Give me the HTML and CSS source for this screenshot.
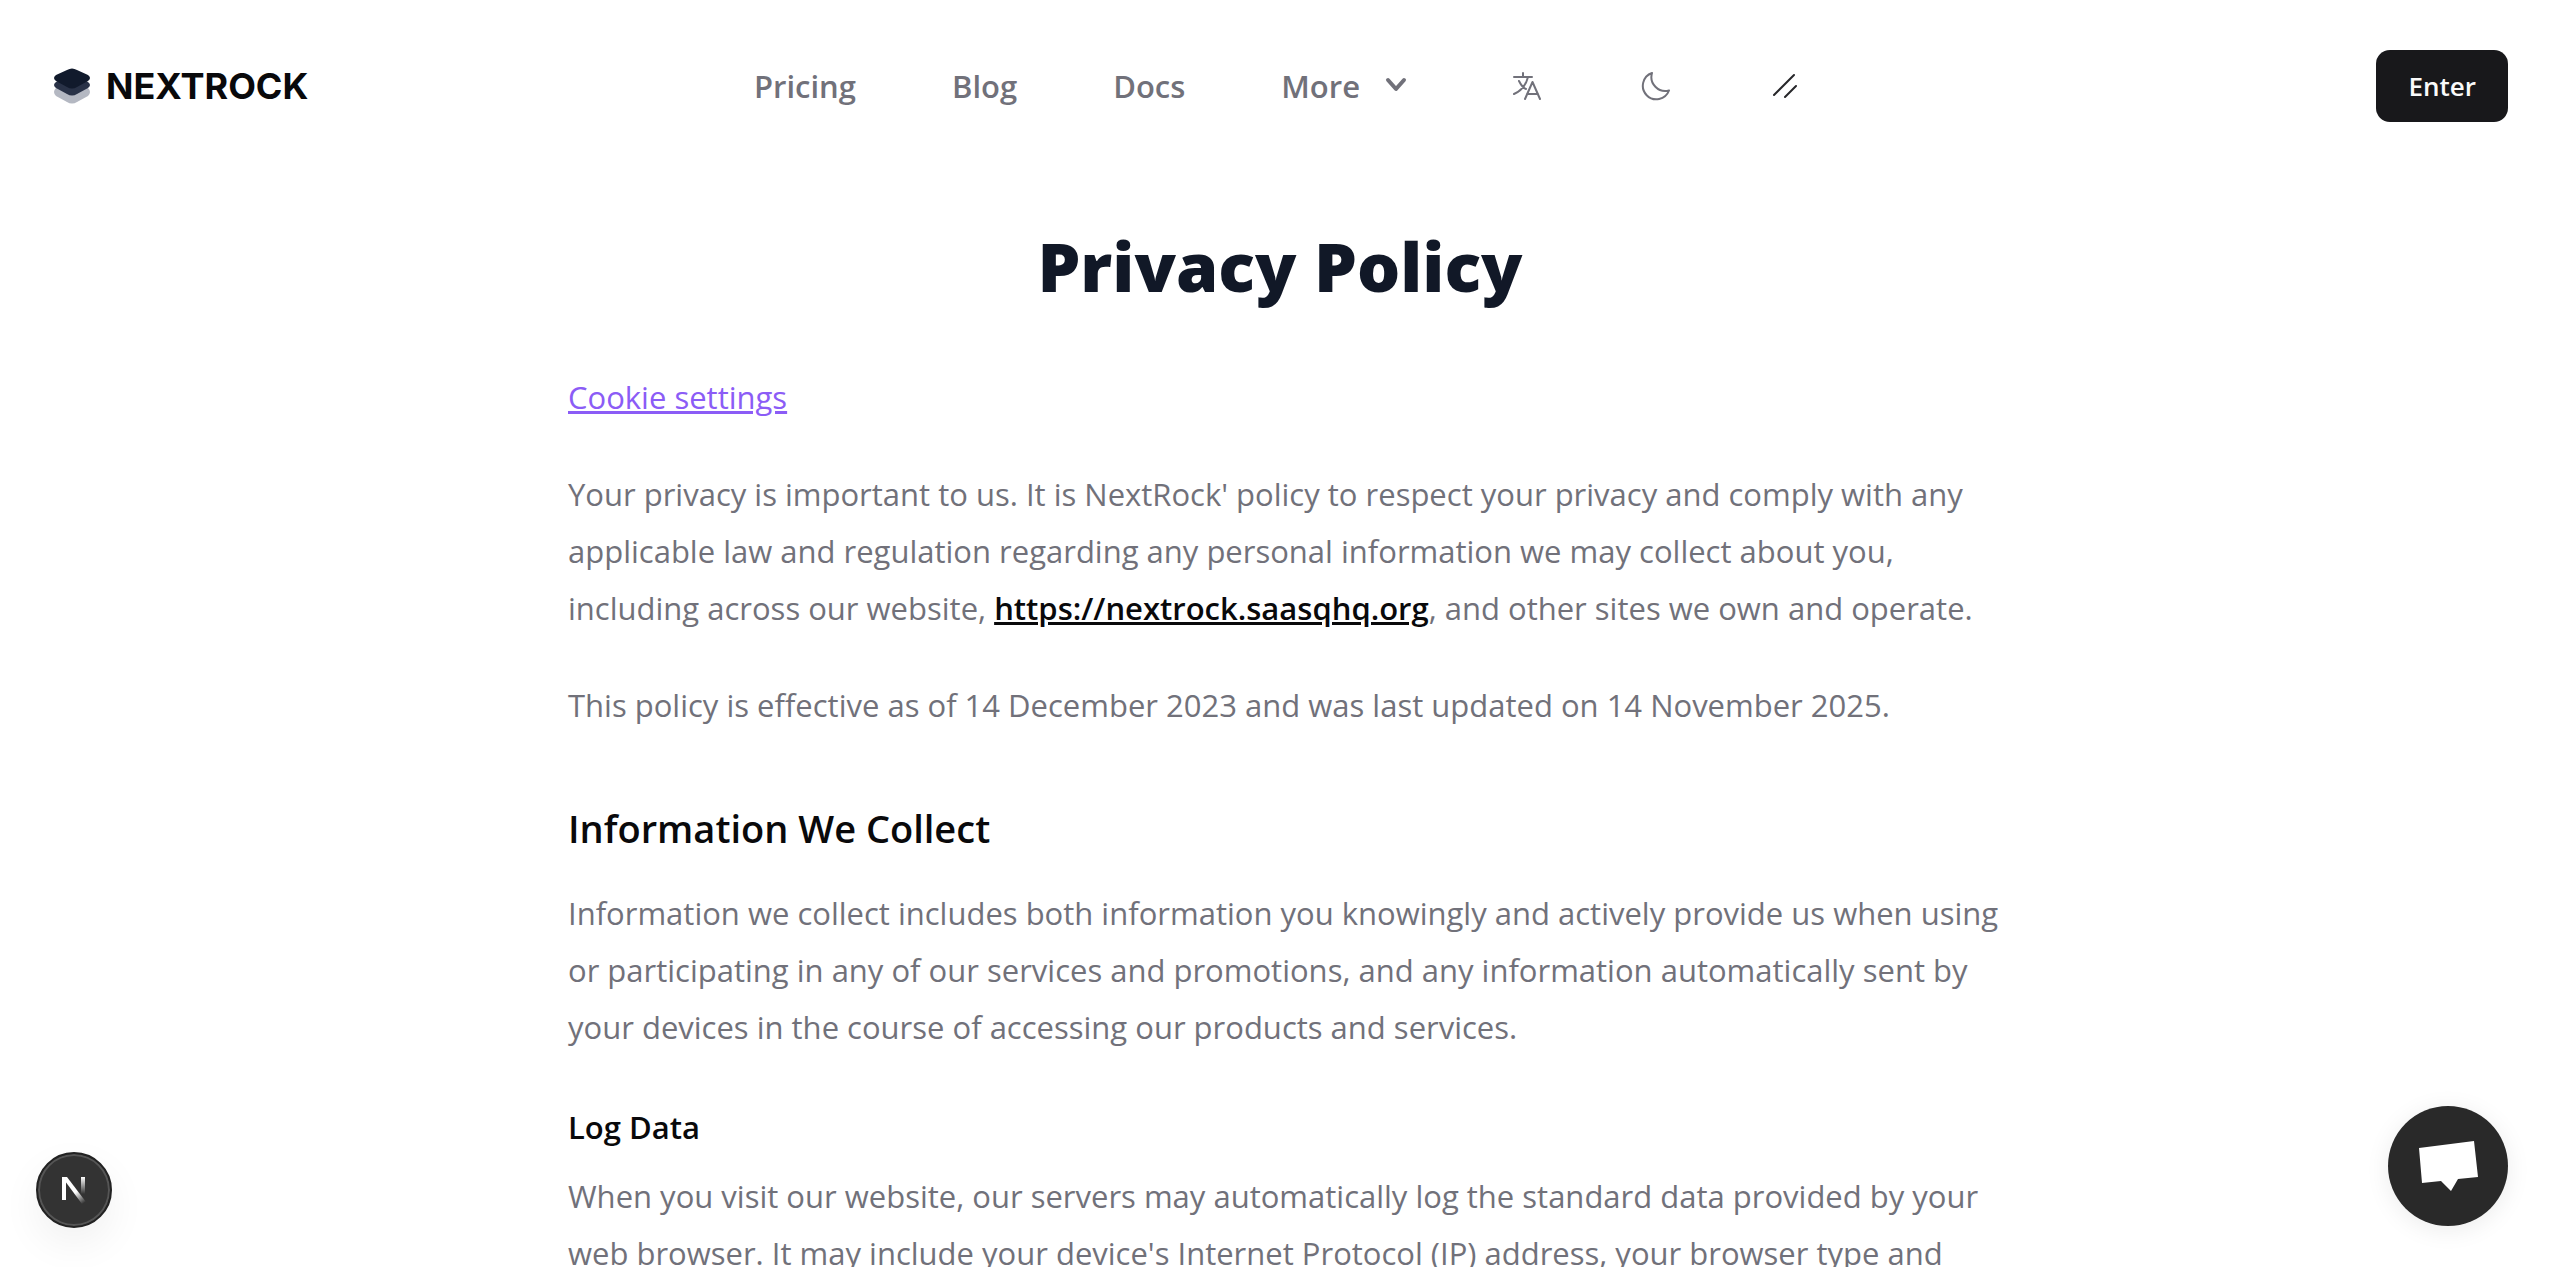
FILE: index.html
```
<!DOCTYPE html>
<html lang="en">

<head>
    <meta charset="UTF-8">
    <meta name="viewport" content="width=device-width, initial-scale=1.0">
    <title>Privacy Policy - NextRock</title>
    <link rel="stylesheet" href="styles.css">
</head>

<body>

    <header class="header">
        <a class="logo" href="#">
            <svg class="logo-icon" viewBox="0 0 36 36" aria-hidden="true">
                <path d="M2 20 L12 15 Q18 12 24 15 L34 20 Q38 24 34 28 L23 34 Q18 37 13 34 L2 28 Q-2 24 2 20Z" fill="#b4b8c2" />
                <path d="M2 14 L12 9 Q18 6 24 9 L34 14 Q38 17 34 20 L23 26 Q18 29 13 26 L2 20 Q-2 17 2 14Z" fill="#293247" />
                <path d="M2 7 L13 2 Q18 -1 23 2 L34 7 Q38 10 34 13 L23 19 Q18 22 13 19 L2 13 Q-2 10 2 7Z" fill="#111a2c" />
            </svg>
            <span>NEXTROCK</span>
        </a>

        <nav class="nav">
            <a href="#">Pricing</a>
            <a href="#">Blog</a>
            <a href="#">Docs</a>
            <button class="more" type="button">
                More
                <svg class="chevron" viewBox="0 0 24 24" aria-hidden="true">
                    <path d="M4 6 L12 15 L20 6" />
                </svg>
            </button>
            <div class="nav-icons">
                <button class="icon-button" type="button" aria-label="Language">
                    <svg viewBox="0 0 30 30" aria-hidden="true">
                        <path d="M2 6 H20 M11 2 V6 M16 6 C14 14 9 20 2 23 M7 10 C9 14 11 17 14 18 M13 28 L20.500 11 L28 28 M15 23 H26" />
                    </svg>
                </button>
                <button class="icon-button" type="button" aria-label="Dark mode">
                    <svg viewBox="0 0 30 30" aria-hidden="true">
                        <path d="M11 2 A13.500 13.500 0 1 0 28 19.500 A14 14 0 0 1 11 2Z" />
                    </svg>
                </button>
                <button class="icon-button dark" type="button" aria-label="Theme lines">
                    <svg viewBox="0 0 30 30" aria-hidden="true">
                        <path d="M4 24 L24 4 M15 26 L26 15" />
                    </svg>
                </button>
            </div>
        </nav>

        <a class="enter" href="#">Enter</a>
    </header>

    <main class="content">
        <h1>Privacy Policy</h1>

        <div class="prose">
            <p><a class="cookie" href="#">Cookie settings</a></p>

            <p>Your privacy is important to us. It is NextRock' policy to respect your privacy and comply with any applicable law and regulation regarding any personal information we may collect about you, including across our website, <a class="site" href="#">https://nextrock.saasqhq.org</a>, and other sites we own and operate.</p>

            <p>This policy is effective as of 14 December 2023 and was last updated on 14 November 2025.</p>

            <h2>Information We Collect</h2>

            <p>Information we collect includes both information you knowingly and actively provide us when using or participating in any of our services and promotions, and any information automatically sent by your devices in the course of accessing our products and services.</p>

            <h3>Log Data</h3>

            <p>When you visit our website, our servers may automatically log the standard data provided by your web browser. It may include your device's Internet Protocol (IP) address, your browser type and</p>
        </div>
    </main>

    <button class="dev-badge" type="button" aria-label="Developer tools">
        <svg viewBox="0 0 28 30" aria-hidden="true">
            <defs>
                <linearGradient id="diagonal" gradientUnits="userSpaceOnUse" x1="16" y1="17" x2="24" y2="28">
                    <stop offset="0" stop-color="#fff" />
                    <stop offset="1" stop-color="#fff" stop-opacity="0" />
                </linearGradient>
                <linearGradient id="stem" gradientUnits="userSpaceOnUse" x1="0" y1="2" x2="0" y2="19">
                    <stop offset="0" stop-color="#fff" />
                    <stop offset="1" stop-color="#fff" stop-opacity="0" />
                </linearGradient>
            </defs>
            <path d="M2 2 H6 V25 H2Z" fill="#fff" />
            <path d="M2 2 H7 L26 27 L22 29Z" fill="url(#diagonal)" />
            <path d="M21 2 H25 V19 H21Z" fill="url(#stem)" />
        </svg>
    </button>

    <button class="chat" type="button" aria-label="Open chat">
        <svg viewBox="0 0 60 52" aria-hidden="true">
            <path d="M1 8 L56 1 L60 37 L40 39 L33 51 L23 41 L4 43Z" fill="#fff" />
        </svg>
    </button>

</body>

</html>
```

FILE: styles.css
```
* {
    box-sizing: border-box;
}

body {
    margin: 0;
    height: 100vh;
    overflow: hidden;
    background-color: #fff;
    color: #71717a;
    font-family: "Segoe UI", "Open Sans", "Noto Sans", sans-serif;
    font-size: 31px;
    line-height: 57px;
}

button {
    border: 0;
    padding: 0;
    background: none;
    color: inherit;
    font: inherit;
    cursor: pointer;
}

a {
    color: inherit;
    text-decoration: none;
}

svg {
    display: block;
    fill: none;
}

.header {
    display: grid;
    grid-template-columns: 1fr auto 1fr;
    align-items: center;
    padding: 50px 52px 50px 54px;
}

.logo {
    display: flex;
    align-items: center;
    gap: 16px;
    color: #09090b;
    font-family: Inter, sans-serif;
    font-size: 36px;
    font-weight: 700;
    line-height: 72px;
}

.logo-icon {
    width: 36px;
    height: 36px;
}

.nav {
    display: flex;
    align-items: center;
    gap: 96px;
    font-size: 31px;
    font-weight: 600;
}

.more {
    display: flex;
    align-items: center;
    gap: 24px;
}

.chevron {
    width: 24px;
    height: 24px;
    stroke: #71717a;
    stroke-width: 4;
    stroke-linecap: round;
    stroke-linejoin: round;
}

.nav-icons {
    display: flex;
    gap: 99px;
    padding: 0 8px;
}

.icon-button svg {
    width: 30px;
    height: 30px;
    stroke: #71717a;
    stroke-width: 2;
    stroke-linecap: round;
    stroke-linejoin: round;
}

.icon-button.dark svg {
    stroke: #27272a;
}

.enter {
    justify-self: end;
    padding: 0 32px;
    border-radius: 14px;
    background-color: #18181b;
    color: #fafafa;
    font-size: 26px;
    font-weight: 600;
    line-height: 72px;
}

.content {
    max-width: 1440px;
    margin: 0 auto;
    padding-top: 48px;
}

.prose {
    padding-left: 8px;
}

.prose p {
    margin: 0 0 40px;
}

h1 {
    margin: 0 0 57px;
    color: #111827;
    font-size: 68px;
    font-weight: 800;
    line-height: 92px;
    text-align: center;
}

.prose h2 {
    margin: 66px 0 28px;
    color: #09090b;
    font-size: 38px;
    font-weight: 600;
}

.prose h3 {
    margin: 43px 0 12px;
    color: #09090b;
    font-size: 31px;
    font-weight: 600;
}

.cookie {
    color: #8b5cf6;
    text-decoration: underline;
}

.site {
    color: #09090b;
    font-weight: 600;
    text-decoration: underline;
}

.dev-badge,
.chat {
    position: fixed;
    display: flex;
    align-items: center;
    justify-content: center;
    border-radius: 50%;
}

.dev-badge {
    left: 36px;
    bottom: 39px;
    width: 76px;
    height: 76px;
    border: 2px solid #222;
    background-color: #333;
    box-shadow: inset 0 0 0 2px #555, 0 16px 40px rgba(0, 0, 0, 0.06);
}

.dev-badge svg {
    width: 28px;
    height: 30px;
}

.chat {
    right: 52px;
    bottom: 41px;
    width: 120px;
    height: 120px;
    background-color: #292929;
    box-shadow: 0 4px 24px rgba(0, 0, 0, 0.08);
}

.chat svg {
    width: 60px;
    height: 52px;
}
```
